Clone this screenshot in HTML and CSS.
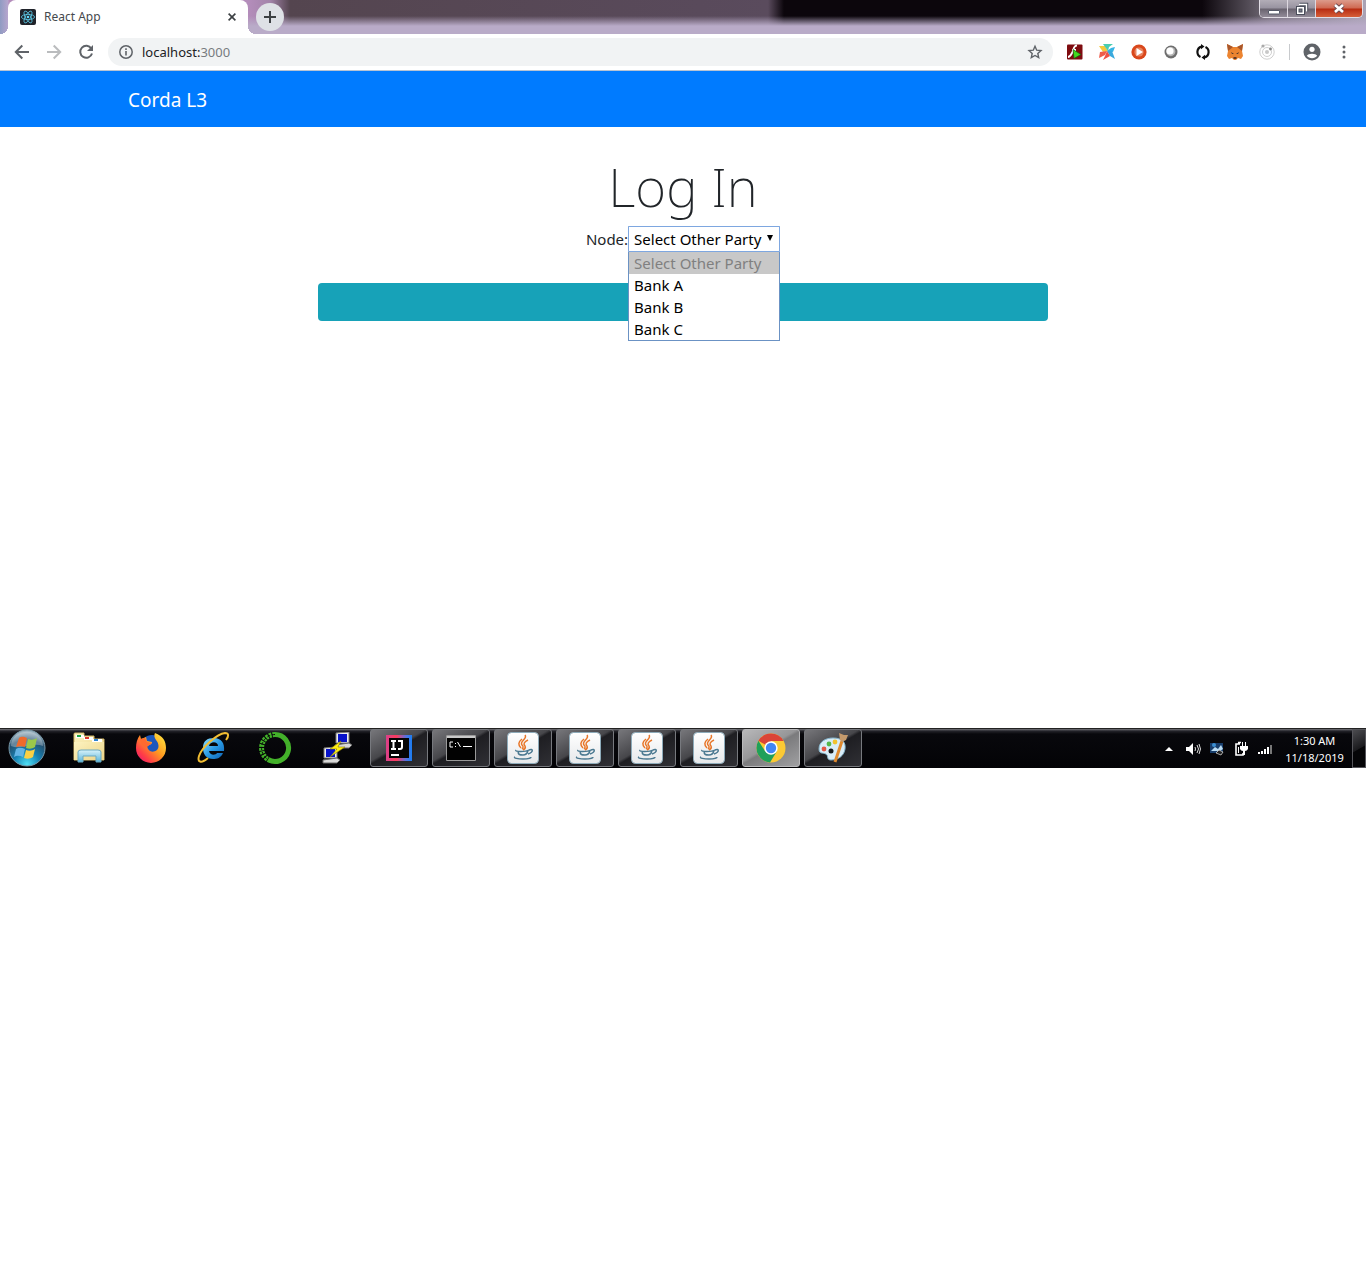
FILE: index.html
```html
<!DOCTYPE html>
<html lang="en">
<head>
<meta charset="utf-8">
<title>React App</title>
<link rel="stylesheet" href="styles.css">
</head>
<body>
<svg class="defs" aria-hidden="true">
  <defs>
    <linearGradient id="paper" x2="0" y2="1"><stop stop-color="#fff"/><stop offset="1" stop-color="#e6e8ea"/></linearGradient>
    <linearGradient id="folder" x2="1" y2="1"><stop stop-color="#fdf3c0"/><stop offset="1" stop-color="#ecd489"/></linearGradient>
    <linearGradient id="glass" x2="0" y2="1"><stop stop-color="#d8f3fb"/><stop offset="1" stop-color="#59b3d8"/></linearGradient>
    <radialGradient id="orb" cx=".5" cy=".95" r=".9"><stop stop-color="#4fe0f5"/><stop offset=".4" stop-color="#1682b4"/><stop offset=".75" stop-color="#24506f"/><stop offset="1" stop-color="#9bb2c0"/></radialGradient>
    <linearGradient id="fire" x1="1" y1="0" x2="0" y2="1"><stop stop-color="#fff044"/><stop offset=".45" stop-color="#ff9a20"/><stop offset=".75" stop-color="#ff3b48"/><stop offset="1" stop-color="#e01080"/></linearGradient>
    <linearGradient id="ie" x2="1" y2="1"><stop stop-color="#8fe0ff"/><stop offset=".5" stop-color="#2a9be6"/><stop offset="1" stop-color="#0d5fb0"/></linearGradient>
    <linearGradient id="idea" x2="1" y2="0"><stop stop-color="#d9408a"/><stop offset=".4" stop-color="#fc3c5c"/><stop offset=".8" stop-color="#4a76e8"/><stop offset="1" stop-color="#1a7df0"/></linearGradient>
    <symbol id="java" viewBox="0 0 32 32">
      <rect x=".5" y=".5" width="31" height="31" rx="4" fill="url(#paper)" stroke="#8dabba"/>
      <path d="M18 3c3 4-6 6-3 10 1 1 2 2 0 4M21 8c-4 2-5 4-3 6 1 2 0 3-2 4M15 7c-4 3-4 6-1 9" fill="none" stroke="#e8772a" stroke-width="1.500"/>
      <path d="M9 18c-2 2 10 2 13 0M11 19c0 4 2 4 5 4s4-1 5-4M22 18c4-2 5 2-1 4M8 25c-2 1 3 2 8 2s8-1 8-2" fill="none" stroke="#4a7890" stroke-width="1.500"/>
    </symbol>
  </defs>
</svg>

<div class="screen">
  <header class="browser">
    <div class="tabstrip">
      <div class="tab">
        <svg class="favicon" width="16" height="16" viewBox="0 0 16 16"><rect width="16" height="16" rx="2" fill="#20232a"/><g fill="none" stroke="#5cc9e6" stroke-width=".8"><ellipse cx="8" cy="8" rx="6.600" ry="2.600"/><ellipse cx="8" cy="8" rx="6.600" ry="2.600" transform="rotate(60 8 8)"/><ellipse cx="8" cy="8" rx="6.600" ry="2.600" transform="rotate(120 8 8)"/></g><circle cx="8" cy="8" r="1.300" fill="#61dafb"/></svg>
        <span class="tab-title">React App</span>
        <button class="tab-close" aria-label="Close tab"><svg width="8" height="8" viewBox="0 0 8 8"><path d="M.6.6l6.800 6.800M7.400.6L.6 7.400" stroke="#3c4043" stroke-width="1.600"/></svg></button>
      </div>
      <button class="new-tab" aria-label="New tab"><svg width="12" height="12" viewBox="0 0 12 12"><path d="M6 0v12M0 6h12" stroke="#3c4043" stroke-width="2"/></svg></button>
      <div class="window-controls">
        <button class="win-btn" aria-label="Minimize"><svg width="12" height="14" viewBox="0 0 12 14"><rect x=".5" y="8.500" width="11" height="3.500" rx=".5" fill="#fff" stroke="#555a68"/></svg></button>
        <button class="win-btn" aria-label="Restore"><svg width="14" height="14" viewBox="0 0 14 14"><path d="M4.500 2.500h7v7" fill="none" stroke="#4b4f5c" stroke-width="3.400"/><path d="M4 2.500h7.500v7" fill="none" stroke="#fff" stroke-width="1.400"/><rect x="1.500" y="4.500" width="8" height="8" fill="#fff" stroke="#4b4f5c"/><rect x="4" y="7" width="3" height="3" fill="#777c88" stroke="#4b4f5c"/></svg></button>
        <button class="win-btn win-close" aria-label="Close"><svg width="14" height="14" viewBox="0 0 14 14"><path d="M3 3l8 7M11 3l-8 7" stroke="#6b4a50" stroke-width="4.400"/><path d="M3 3l8 7M11 3l-8 7" stroke="#fff" stroke-width="2.600"/></svg></button>
      </div>
    </div>
    <div class="toolbar">
      <button class="tool" aria-label="Back"><svg width="16" height="16" viewBox="0 0 16 16"><path d="M15 8H2M8.300 1.500L1.800 8l6.500 6.500" fill="none" stroke="#5f6368" stroke-width="2"/></svg></button>
      <button class="tool" aria-label="Forward" disabled><svg width="16" height="16" viewBox="0 0 16 16"><path d="M1 8h13M7.700 1.500L14.200 8l-6.500 6.500" fill="none" stroke="#babcbe" stroke-width="2"/></svg></button>
      <button class="tool" aria-label="Reload"><svg width="16" height="16" viewBox="0 0 16 16"><path d="M13.300 4.500A6 6 0 1 0 14 9.500" fill="none" stroke="#5f6368" stroke-width="2"/><path d="M15 1v6H9z" fill="#5f6368"/></svg></button>
      <div class="omnibox">
        <svg width="14" height="14" viewBox="0 0 14 14"><circle cx="7" cy="7" r="6.200" fill="none" stroke="#5f6368" stroke-width="1.500"/><path d="M7 6v4.500M7 3.300v1.600" stroke="#5f6368" stroke-width="1.600"/></svg>
        <span class="url">localhost:<span class="port">3000</span></span>
        <button class="star" aria-label="Bookmark this page"><svg width="16" height="16" viewBox="0 0 16 16"><path d="M8 2.200l1.700 4 4.300.4-3.200 2.900.9 4.200L8 11.500l-3.700 2.200.9-4.200L2 6.600l4.300-.4z" fill="none" stroke="#5f6368" stroke-width="1.400"/></svg></button>
      </div>
      <button class="tool" aria-label="Flash"><svg width="16" height="16" viewBox="0 0 16 16"><rect y=".5" width="15.500" height="15" rx="1" fill="#7e0c10"/><path d="M10 1.500C6 1.500 7 6 5 9c-1 2-2 4-4 4M5 6h4" fill="none" stroke="#fff" stroke-width="1.800"/><path d="M6 5.500l8 5-7 4z" fill="#42d91f" stroke="#175d10" stroke-width=".7"/></svg></button>
      <button class="tool" aria-label="Pinwheel extension"><svg width="16" height="16" viewBox="0 0 16 16"><path d="M0 2l6 0 3 5-5 1z" fill="#f4c83d"/><path d="M4 0h10l-4 3-1 4z" fill="#48cdb3"/><path d="M8 7l4-3 4-1-2 5z" fill="#35b4e5"/><path d="M8 7l5 0 3 8-5-3z" fill="#39a9dd"/><path d="M8 7l3 5-7 4 2-4z" fill="#ef5145"/><path d="M8 7l-2 4-6 3 1-6z" fill="#ef5c4b"/></svg></button>
      <button class="tool" aria-label="Video extension"><svg width="16" height="16" viewBox="0 0 16 16"><circle cx="8" cy="8" r="7.600" fill="#d9481c"/><circle cx="8" cy="8" r="4.600" fill="#e98561"/><path d="M5.500 4v8l6.500-4z" fill="#fff"/></svg></button>
      <button class="tool" aria-label="Sphere extension"><svg width="14" height="14" viewBox="0 0 14 14"><circle cx="7" cy="7" r="6.500" fill="#6e6e6e"/><circle cx="6.800" cy="6.600" r="4.600" fill="#b5b5b5"/><circle cx="6" cy="6" r="3.600" fill="#fff"/></svg></button>
      <button class="tool" aria-label="Sync extension"><svg width="16" height="16" viewBox="0 0 16 16"><path d="M5.500 13A5.600 5.600 0 0 1 6.500 2.600M10.500 3A5.600 5.600 0 0 1 9.500 13.400" fill="none" stroke="#111" stroke-width="2.200"/><path d="M6 0v5.200L9.500 2.600zM10 10.800V16l-3.500-2.600z" fill="#111"/></svg></button>
      <button class="tool" aria-label="MetaMask"><svg width="16" height="16" viewBox="0 0 16 16"><path d="M0 0l6 3h4l6-3-1 7 1 5-2 3-3-1-2 2H7l-2-2-3 1-2-3 1-5z" fill="#ec8430"/><path d="M0 0l6 3-5 4zM16 0l-6 3 5 4z" fill="#a9572b"/><path d="M4 8l3 2H5zM12 8l-3 2h2z" fill="#47352c"/><path d="M6.500 13h3v2h-3z" fill="#623b2a"/></svg></button>
      <button class="tool" aria-label="Orbit extension"><svg width="16" height="16" viewBox="0 0 16 16"><g fill="none" stroke="#cfcfcf"><circle cx="8" cy="8" r="7.200"/><circle cx="8" cy="8" r="4.500"/></g><circle cx="8" cy="8" r="2" fill="#c8c8c8"/><circle cx="4" cy="2" r="1.600" fill="#aaa"/><circle cx="11.500" cy="5" r="1.400" fill="#888"/></svg></button>
      <span class="tool-divider"></span>
      <button class="tool" aria-label="Profile"><svg width="18" height="18" viewBox="0 0 18 18"><circle cx="9" cy="9" r="8.500" fill="#5f6368"/><circle cx="9" cy="6.300" r="2.600" fill="#fff"/><path d="M3.800 12.700C5 10 13 10 14.200 12.700 12 16 6 16 3.800 12.700z" fill="#fff"/></svg></button>
      <button class="tool" aria-label="Menu"><svg width="4" height="14" viewBox="0 0 4 14"><g fill="#5f6368"><circle cx="2" cy="2" r="1.500"/><circle cx="2" cy="7" r="1.500"/><circle cx="2" cy="12" r="1.500"/></g></svg></button>
    </div>
  </header>

  <nav class="navbar"><a class="brand" href="#">Corda L3</a></nav>

  <main class="page">
    <h1 class="title">Log In</h1>
    <form class="login">
      <div class="field">
        <label for="node">Node:</label>
        <div class="picker">
          <select id="node" class="node-select"><option>Select Other Party</option><option>Bank A</option><option>Bank B</option><option>Bank C</option></select>
          <svg class="caret" width="6" height="6" viewBox="0 0 6 6"><path d="M0 0h6L3 6z" fill="#000"/></svg>
          <ul class="options" role="listbox" aria-label="Node">
            <li class="option option-disabled" role="option" aria-disabled="true">Select Other Party</li>
            <li class="option" role="option">Bank A</li>
            <li class="option" role="option">Bank B</li>
            <li class="option" role="option">Bank C</li>
          </ul>
        </div>
      </div>
      <button class="submit" type="button" aria-label="Log in"></button>
    </form>
  </main>

  <footer class="taskbar">
    <button class="start" aria-label="Start"><svg width="38" height="38" viewBox="0 0 38 38"><circle cx="19" cy="19" r="18" fill="url(#orb)" stroke="#7898a8"/><path d="M3 17C3-2 35-2 35 17 25 13 13 21 3 17z" fill="#fff" opacity=".3"/><path d="M11 9c3-2 5-1 8 0l-2 9c-3-1-6-1-9 0z" fill="#ef6a2c"/><path d="M20 10c3 1 6 1 9-1l-2 9c-3 2-6 2-9 1z" fill="#9bc84a"/><path d="M8 20c3-2 6-1 9 0l-2 8c-3-1-6-2-9 0z" fill="#63b4e5"/><path d="M18 21c3 1 6 1 9-1l-2 8c-3 2-6 2-9 1z" fill="#fbd044"/></svg></button>
    <div class="apps">
      <button class="app" aria-label="Explorer"><svg width="34" height="32" viewBox="0 0 34 32"><path d="M2 4V2q0-1 1-1h9v3h10v3h10v21H2z" fill="url(#folder)" stroke="#d0b566"/><path d="M4 3h8v3H4zM12 5h9v3h-9zM20 7h10v3H20z" fill="#fff"/><path d="M5 3h4v2H5z" fill="#1da548"/><path d="M13 5h4v2h-4z" fill="#d9392d"/><path d="M22 7h4v2h-4z" fill="#2e83cf"/><path d="M2 10h30v18H2z" fill="url(#folder)"/><path d="M6 30V20q0-2 3-2h17q3 0 3 2v10h-5v-6H11v6z" fill="url(#glass)" stroke="#6ba9c1"/></svg></button>
      <button class="app" aria-label="Firefox"><svg width="32" height="32" viewBox="0 0 32 32"><circle cx="17" cy="14" r="11" fill="#1c57bd"/><path d="M20 1c8 3 11 8 11 15A15 15 0 0 1 1 16C1 11 2 7 5 3l1 4 5-2 1 4 5 1c0 3-3 3-5 4 1 6 6 7 10 4 3-3 1-8-1-10-2-3-2-5-1-7z" fill="url(#fire)"/><path d="M5 7l5-1 2 4 5 1-4 3-2 2c-3-2-6-4-6-9z" fill="#ff6a30"/></svg></button>
      <button class="app" aria-label="Internet Explorer"><svg width="34" height="32" viewBox="0 0 34 32"><path d="M27 21c-2 5-6 6-10 6C11 27 7 23 7 16S11 6 18 6s11 5 10 13H13c1 5 7 4 8 2zM13 14h9c0-5-8-5-9 0z" fill="url(#ie)"/><path d="M12 26C5 32 1 30 3 24 6 15 21 2 29 1c4 0 4 3 1 7" fill="none" stroke="#f1bd32" stroke-width="2"/></svg></button>
      <button class="app" aria-label="Anaconda"><svg width="34" height="34" viewBox="0 0 34 34"><path d="M17 3.500a13.500 13.500 0 1 1-7 25" fill="none" stroke="#43b02a" stroke-width="5"/><path d="M17 3.500a13.500 13.500 0 0 0-7 25" fill="none" stroke="#43b02a" stroke-width="5" stroke-dasharray="2.500 1"/><path d="M17 3.500a13.500 13.500 0 0 0-7 25" fill="none" stroke="#08090a" stroke-width="1" stroke-dasharray="3 2"/></svg></button>
      <button class="app" aria-label="PuTTY"><svg width="32" height="32" viewBox="0 0 32 32"><g id="pc"><path d="M15 1l13-1v11H15z" fill="#eee" stroke="#777"/><path d="M17 2h9v8h-9z" fill="#0712c9"/><path d="M14 13l14-2 3 2-3 3H14z" fill="#d8d8d8" stroke="#666"/></g><use href="#pc" x="-12" y="15"/><path d="M20 9l-11 8h7l-7 8 15-10h-7z" fill="#ffee15" stroke="#867b00" stroke-width=".6"/></svg></button>
      <button class="app app-open" aria-label="IntelliJ IDEA"><svg width="28" height="28" viewBox="0 0 28 28"><path d="M1 1h26v26H1z" fill="url(#idea)"/><path d="M4 4h20v20H4z" fill="#050505"/><path d="M6 7h5M8.500 7v8M6 15h5M13 7h4v6q0 2-2 2h-2M6 21h8" fill="none" stroke="#fff" stroke-width="2"/></svg></button>
      <button class="app app-open" aria-label="Command Prompt"><svg width="30" height="26" viewBox="0 0 30 26"><path d="M.5.5h29v25H.5z" fill="#020202" stroke="#9a9a9a"/><path d="M1 1h28v2H1z" fill="#c9c9c9"/><path d="M7 7H4v5h3M9.500 8v1M9.500 11v1M11.500 7l3 5M17 11.500h9" fill="none" stroke="#fff"/></svg></button>
      <button class="app app-open" aria-label="Java"><svg width="32" height="32"><use href="#java"/></svg></button>
      <button class="app app-open" aria-label="Java"><svg width="32" height="32"><use href="#java"/></svg></button>
      <button class="app app-open" aria-label="Java"><svg width="32" height="32"><use href="#java"/></svg></button>
      <button class="app app-open" aria-label="Java"><svg width="32" height="32"><use href="#java"/></svg></button>
      <button class="app app-open app-active" aria-label="Chrome"><svg width="30" height="30" viewBox="0 0 30 30"><circle cx="15" cy="15" r="14.500" fill="#fbc934"/><path d="M15 15L2.400 7.800A14.500 14.500 0 0 1 27.600 8H15z" fill="#db4437"/><path d="M2.400 7.800A14.500 14.500 0 0 0 14 29.500L21 18l-6-3-6 3z" fill="#1fa05a"/><circle cx="15" cy="15" r="6.700" fill="#fff"/><circle cx="15" cy="15" r="5.200" fill="#4285f4"/></svg></button>
      <button class="app app-open" aria-label="Paint"><svg width="34" height="32" viewBox="0 0 34 32"><path d="M17 6c9 0 13 4 12 11-1 7-7 11-14 11-4 0-3-3-4-5-2-3-8 0-8-6C3 10 9 6 17 6z" fill="#d9edf8" stroke="#86b5cc"/><circle cx="15" cy="19" r="2.500" fill="#16181b"/><circle cx="8" cy="17" r="2.400" fill="#e45745"/><circle cx="13" cy="12" r="2.400" fill="#55b64b"/><circle cx="19" cy="10" r="2.400" fill="#f2c32e"/><path d="M26 9l-7 21" stroke="#e08a30" stroke-width="3"/><path d="M23 1l5 2 4 0-2 5-4 2-2-2z" fill="#c49a6c"/></svg></button>
    </div>
    <div class="tray">
      <span class="tray-icon"><svg width="8" height="4" viewBox="0 0 8 4"><path d="M0 4h8L4 0z" fill="#fff"/></svg></span>
      <span class="tray-icon"><svg width="16" height="14" viewBox="0 0 16 14"><path d="M1 5h3l4-4v12L4 9H1z" fill="#fff"/><path d="M10 5q1 2 0 4M12 3q3 4 0 8M14 2q3 5 0 10" fill="none" stroke="#ddd"/></svg></span>
      <span class="tray-icon"><svg width="16" height="14" viewBox="0 0 16 14"><path d="M1 1h13v10H1z" fill="#173d6b"/><path d="M2 9l4-4 3 2 3-4 2 4-3 2z" fill="#b9dcf4"/><circle cx="5" cy="3" r="2" fill="#3b8fd2"/><path d="M7 11l3-3 4 2-2 3z" fill="#222" stroke="#ccc" stroke-width=".8"/></svg></span>
      <span class="tray-icon"><svg width="14" height="16" viewBox="0 0 14 16"><path d="M6 3H2v11h7v-2M4 1.500h3" fill="none" stroke="#fff" stroke-width="1.600"/><path d="M4 6h1v6H4zM6 5h8v3q-1 2-3 2v4H9v-4Q7 10 6 8zM8 1h1v4H8zM11 1h1v4h-1z" fill="#fff"/></svg></span>
      <span class="tray-icon"><svg width="14" height="10" viewBox="0 0 14 10"><path d="M0 8h2v2H0zM3 7h2v3H3zM6 5h2v5H6zM9 3h2v7H9z" fill="#fff"/><path d="M12 1h2v9h-2z" fill="#777"/></svg></span>
      <time class="clock" datetime="2019-11-18T01:30"><span>1:30 AM</span><span>11/18/2019</span></time>
      <button class="show-desktop" aria-label="Show desktop"></button>
    </div>
  </footer>
</div>
</body>
</html>
```
FILE: styles.css
```css
* { box-sizing: border-box; }
body { margin: 0; background: #fff; color: #212529; font-family: "Noto Sans", "Open Sans", sans-serif; font-size: 15px; line-height: 24px; }
button { margin: 0; padding: 0; border: 0; background: none; font: inherit; }
svg { display: block; flex: none; }
.defs { position: absolute; width: 0; height: 0; }

.screen { display: flex; flex-direction: column; min-height: 768px; }

/* browser chrome */
.tabstrip {
  display: flex; height: 34px; padding: 0 3px 0 8px;
  background:
    linear-gradient(90deg, #8f9bc2, #b7a6ce 8px, transparent 9px),
    linear-gradient(transparent 16px, #b9abc8 26px),
    linear-gradient(90deg, #b48dbb 248px, #a384aa 270px, #54454f 290px, #594a5b 700px, #5a4b5d 768px, #0c060c 784px, #0c060c 88%, #756e7a 93%, #aaa3b5);
}
.tab { position: relative; display: flex; align-items: center; width: 240px; padding: 0 12px; gap: 8px; background: #fff; border-radius: 8px 8px 0 0; }
.tab::before, .tab::after { content: ""; position: absolute; bottom: 0; width: 8px; height: 8px; }
.tab::before { right: 100%; background: radial-gradient(circle at 0 0, transparent 8px, #fff 8px); }
.tab::after { left: 100%; background: radial-gradient(circle at 100% 0, transparent 8px, #fff 8px); }
.tab-title { flex: 1; color: #45494d; font-size: 12px; line-height: 16px; }
.new-tab { display: grid; place-items: center; width: 28px; height: 28px; margin: 3px 0 0 8px; border-radius: 50%; background: #dee1e6; }
.window-controls { display: flex; height: 18px; margin-left: auto; border: 1px solid #e1dde5; border-top: 0; border-radius: 0 0 5px 5px; overflow: hidden; }
.win-btn { display: grid; place-items: center; width: 28px; border-right: 1px solid #ddd8e0; background: linear-gradient(#b2adb7, #9893a0 8px, #69636f 9px, #928b98); }
.win-close { width: 46px; border-right: 0; background: linear-gradient(#dc9b8b, #cf6952 8px, #b72c12 9px, #d65f38); }
.toolbar { display: flex; align-items: center; height: 37px; padding: 0 6px; border-bottom: 1px solid #b8c4d4; background: #fff; }
.tool { display: grid; place-items: center; width: 32px; height: 28px; }
.omnibox { display: flex; flex: 1; align-items: center; height: 28px; margin: 0 6px; padding: 0 10px 0 11px; gap: 9px; border-radius: 14px; background: #f1f3f4; }
.url { flex: 1; color: #202124; font-size: 13px; line-height: 20px; }
.port { color: #777b80; }
.tool-divider { width: 1px; height: 16px; margin: 0 6px; background: #c8cacd; }

/* application */
.navbar { display: flex; align-items: center; height: 56px; padding: 2px 128px 0; background: #007bff; }
.brand { color: #fff; font-size: 19px; line-height: 30px; text-decoration: none; }
.page { flex: 1; width: 100%; max-width: 730px; margin: 0 auto; padding-top: 26px; }
.title { margin: 0; font-size: 53px; font-weight: 200; line-height: 68px; text-align: center; }
.login { display: flex; flex-direction: column; gap: 32px; padding-top: 5px; }
.field { display: flex; align-items: center; justify-content: center; height: 25px; }
.picker { position: relative; width: 152px; }
.node-select { display: block; appearance: none; width: 100%; height: 26px; padding: 0 5px; border: 1px solid #4d7fc4; border-radius: 1px; outline: 1px solid #7ea7e0; outline-offset: -1px; background: #fff; color: #000; font: inherit; }
.caret { position: absolute; right: 7px; top: 9px; pointer-events: none; }
.options { position: absolute; top: 100%; left: 0; width: 100%; margin: 0; padding: 0; border: 1px solid #6b92c4; border-top: 0; background: #fff; color: #000; list-style: none; }
.option { height: 22px; padding: 0 5px; line-height: 22px; white-space: nowrap; }
.option-disabled { background: #c8c8c8; color: #808080; }
.submit { height: 38px; border-radius: 4px; background: #17a2b8; }

/* desktop taskbar */
.taskbar { display: flex; height: 40px; border-top: 1px solid #222; background: linear-gradient(#77777c, #24242a 2px, #08080c 5px, #030306); }
.start { display: grid; place-items: center; width: 54px; height: 38px; }
.apps { display: flex; gap: 4px; margin-left: 6px; }
.app { display: grid; place-items: center; width: 58px; height: 38px; }
.app-open { border: 1px solid #77797e; border-radius: 3px; background: linear-gradient(150deg, #77777b, #46464a 45%, #1e1e22 50%, #303035); }
.app-active { border-color: #b9b9bb; background: linear-gradient(150deg, #b8b8ba, #969698 45%, #7b7b7d 50%, #a0a0a2); }
.tray { display: flex; align-items: center; margin-left: auto; color: #fff; }
.tray-icon { display: grid; place-items: center; width: 24px; height: 40px; }
.clock { display: flex; flex-direction: column; width: 75px; font-size: 11px; line-height: 17px; text-align: center; }
.show-desktop { width: 14px; height: 39px; border: 1px solid #55555a; background: linear-gradient(150deg, #4b4b4f, #1a1a1d 50%, #050507 52%); }
```
